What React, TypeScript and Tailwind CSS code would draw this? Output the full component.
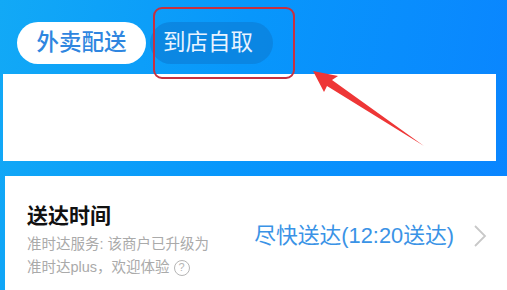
import React from "react";

export default function App() {
  const font = { fontFamily: '"Liberation Sans", "Noto Sans CJK SC", "Noto Sans", sans-serif' };
  return (
    <div
      className="relative w-[507px] h-[290px] overflow-hidden bg-[linear-gradient(100deg,#12a9f6_0%,#0897fb_45%,#0a84ff_100%)]"
      style={font}
    >
      <div className="flex items-center pt-[22px] pl-[17px] gap-[4px]">
        <div className="h-[42px] w-[129px] rounded-full bg-white flex items-center justify-center text-[22.5px] font-medium text-[#2f86e0] leading-none">
          外卖配送
        </div>
        <div className="h-[42px] w-[123px] rounded-full bg-[#0b7fd8]/70 flex items-center pl-[13px] text-[22.5px] text-[#e8f3ff] leading-none">
          到店自取
        </div>
      </div>

      <div className="mt-[10px] ml-[3px] mr-[11px] h-[87px] bg-white" />

      <div className="mt-[15px] ml-[5px] h-[114px] bg-white pt-[26px] pl-[22px] pr-[20px] flex items-start">
        <div className="flex flex-col">
          <div className="text-[21px] font-bold text-[#111] leading-[28px]">送达时间</div>
          <div className="mt-[3px] text-[14.5px] text-[#aaaaaa] leading-[23px]">
            准时达服务: 该商户已升级为
          </div>
          <div className="text-[14.5px] text-[#aaaaaa] leading-[23px] flex items-center">
            准时达plus，欢迎体验
            <span className="ml-[4px] inline-flex items-center justify-center w-[16px] h-[16px] rounded-full border border-[#b5b5b5] text-[11px] leading-none text-[#b5b5b5]">
              ?
            </span>
          </div>
        </div>
        <div className="ml-auto flex items-center mt-[20px]">
          <span className="text-[21.8px] text-[#3a93e6] leading-[28px]">尽快送达(12:20送达)</span>
          <svg className="ml-[19px]" width="14" height="24" viewBox="0 0 14 24">
            <path d="M2 2 L12 12 L2 22" fill="none" stroke="#c8c8c8" strokeWidth="1.8" />
          </svg>
        </div>
      </div>

      <div className="absolute left-[153px] top-[7px] w-[142px] h-[72px] rounded-[9px] border-2 border-[#c8303f]" />

      <svg className="absolute left-0 top-0 pointer-events-none" width="507" height="290" viewBox="0 0 507 290">
        <polygon
          points="313,71 338,76 332,80 424,146 327,86 324,92"
          fill="#ee3636"
        />
      </svg>
    </div>
  );
}
